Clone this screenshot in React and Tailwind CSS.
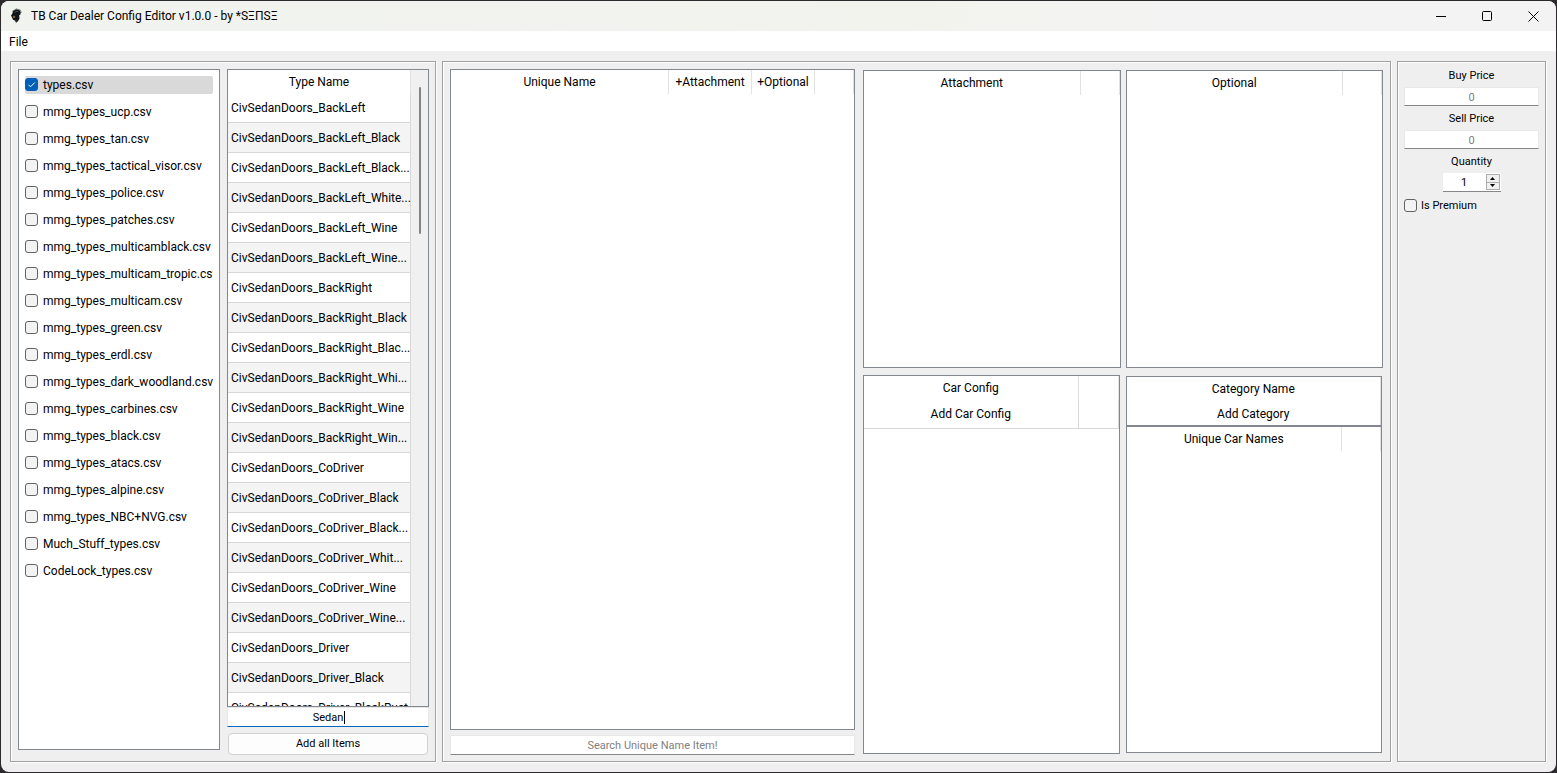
import { useState } from 'react';

const FILES = [
  'types.csv',
  'mmg_types_ucp.csv',
  'mmg_types_tan.csv',
  'mmg_types_tactical_visor.csv',
  'mmg_types_police.csv',
  'mmg_types_patches.csv',
  'mmg_types_multicamblack.csv',
  'mmg_types_multicam_tropic.csv',
  'mmg_types_multicam.csv',
  'mmg_types_green.csv',
  'mmg_types_erdl.csv',
  'mmg_types_dark_woodland.csv',
  'mmg_types_carbines.csv',
  'mmg_types_black.csv',
  'mmg_types_atacs.csv',
  'mmg_types_alpine.csv',
  'mmg_types_NBC+NVG.csv',
  'Much_Stuff_types.csv',
  'CodeLock_types.csv',
];

const TYPES = [
  'CivSedanDoors_BackLeft',
  'CivSedanDoors_BackLeft_Black',
  'CivSedanDoors_BackLeft_Black...',
  'CivSedanDoors_BackLeft_White...',
  'CivSedanDoors_BackLeft_Wine',
  'CivSedanDoors_BackLeft_Wine...',
  'CivSedanDoors_BackRight',
  'CivSedanDoors_BackRight_Black',
  'CivSedanDoors_BackRight_Blac...',
  'CivSedanDoors_BackRight_Whi...',
  'CivSedanDoors_BackRight_Wine',
  'CivSedanDoors_BackRight_Win...',
  'CivSedanDoors_CoDriver',
  'CivSedanDoors_CoDriver_Black',
  'CivSedanDoors_CoDriver_Black...',
  'CivSedanDoors_CoDriver_Whit...',
  'CivSedanDoors_CoDriver_Wine',
  'CivSedanDoors_CoDriver_Wine...',
  'CivSedanDoors_Driver',
  'CivSedanDoors_Driver_Black',
  'CivSedanDoors_Driver_BlackRust',
];

const checkbox =
  'peer block h-[13px] w-[13px] appearance-none rounded-[3px] border border-[#626262] bg-[#f3f3f3] checked:border-[#005fb8] checked:bg-[#005fb8]';
const field =
  'block w-full border border-x-[#e8e8e8] border-t-[#e8e8e8] bg-white pt-px text-center outline-none placeholder:text-[#808080]';
const th = 'h-6 border-r border-[#e2e2e2] p-0 font-normal';

function CheckBox(props) {
  return (
    <span className="relative block shrink-0">
      <input type="checkbox" className={checkbox} {...props} />
      <svg viewBox="0 0 13 13" className="pointer-events-none absolute inset-0 hidden h-[13px] w-[13px] peer-checked:block">
        <path d="M3.5 6.8 5.5 8.8 9.7 4.6" fill="none" stroke="#fff" strokeWidth="1" />
      </svg>
    </span>
  );
}

function Panel({ className, children }) {
  return (
    <section className={`border border-[#a0a0a0] shadow-[1px_1px_0_#fff,inset_1px_1px_0_#fff] ${className}`}>
      {children}
    </section>
  );
}

function Box({ className = '', children }) {
  return <div className={`overflow-hidden border border-[#828790] bg-white ${className}`}>{children}</div>;
}

function TitleBar() {
  return (
    <header className="flex h-[30px] shrink-0 items-center bg-linear-to-r from-[#f1f3ef] via-[#f3f3ee] via-60% to-[#f3f3f3] to-75%">
      <svg viewBox="0 0 14 16" className="ml-2 h-4 w-[14px]">
        <path d="M4.2 2.8 7 1.2l3.2.6 1.6 2.4-.4 2.2-1.2.8.3 3.6-1.6 2.5-1.8 1.5-1.3-2.2-1.8-.8L3 9.4 2 7.6l1.4-2.2z" fill="#111416" />
        <path d="M3 3.6 7.3.9l4 1.2 1 2.6" fill="none" stroke="#6d7068" strokeWidth=".9" />
        <path d="M5.5 4.4 8 3.2l1.6.8" fill="none" stroke="#4c5b67" strokeWidth=".8" />
        <path d="M4.2 8.2h1.6v1.2H4.2zM6.4 12.2l1.4 1" fill="#b79663" stroke="#85714d" strokeWidth=".5" />
      </svg>
      <h1 className="ml-2">TB Car Dealer Config Editor v1.0.0 - by *SΞΠSΞ</h1>
      <div className="ml-auto flex h-full">
        <button aria-label="Minimize" className="flex w-[46px] items-center justify-center">
          <svg width="11" height="11" shapeRendering="crispEdges"><path d="M0 5.5h10" stroke="#000" /></svg>
        </button>
        <button aria-label="Maximize" className="flex w-[46px] items-center justify-center">
          <svg width="11" height="11"><rect x=".5" y=".5" width="9" height="9" rx="1" fill="none" stroke="#000" /></svg>
        </button>
        <button aria-label="Close" className="flex w-[46px] items-center justify-center">
          <svg width="11" height="11"><path d="M.5.5l10 10M10.5.5l-10 10" stroke="#000" /></svg>
        </button>
      </div>
    </header>
  );
}

function FileList() {
  const [checked, setChecked] = useState(['types.csv']);
  const toggle = (name) =>
    setChecked(checked.includes(name) ? checked.filter((n) => n !== name) : [...checked, name]);

  return (
    <Box className="mb-[5px] min-w-0 p-[6px]">
      <ul className="flex flex-col gap-[9px]">
        {FILES.map((name, i) => (
          <li key={name}>
            <label
              className={`flex h-[18px] items-center gap-[5px] overflow-hidden rounded-[2px] pb-px whitespace-nowrap ${i === 0 ? 'bg-[#d9d9d9]' : ''}`}
            >
              <CheckBox checked={checked.includes(name)} onChange={() => toggle(name)} />
              {name}
            </label>
          </li>
        ))}
      </ul>
    </Box>
  );
}

function TypeList() {
  return (
    <div className="flex min-h-0 min-w-0 flex-col">
      <Box className="flex min-h-0 flex-1">
        <div className="min-w-0 flex-1 overflow-hidden">
          <table className="w-full table-fixed border-separate border-spacing-0">
            <thead>
              <tr>
                <th className="h-[23px] border-r border-[#e2e2e2] p-0 font-normal">Type Name</th>
              </tr>
            </thead>
            <tbody>
              {TYPES.map((name) => (
                <tr key={name} className="even:bg-[#f4f4f4]">
                  <td className="h-[30px] border-r border-b border-[#d8d8d8] py-0 pr-0 pl-[3px] whitespace-nowrap">
                    {name}
                  </td>
                </tr>
              ))}
            </tbody>
          </table>
        </div>
        <div className="w-[17px] bg-[#f0f0f0] pt-[17px]">
          <div className="mx-auto h-[147px] w-[2px] rounded-full bg-[#858585]" />
        </div>
      </Box>
      <div className="relative text-[11px] leading-4">
        <input
          aria-label="Search types"
          defaultValue="Sedan"
          className={`h-5 border-b-[#0067c0] caret-transparent ${field}`}
        />
        <span className="pointer-events-none absolute top-1 left-1/2 ml-4 h-[13px] w-px bg-black" />
      </div>
      <button className="mx-px mt-[6px] h-[22px] rounded-[4px] border border-[#d0d0d0] bg-[#fdfdfd] text-[11px] leading-4">
        Add all Items
      </button>
    </div>
  );
}

function HeaderTable({ title, className }) {
  return (
    <Box className={className}>
      <table className="w-full table-fixed border-separate border-spacing-0">
        <thead>
          <tr>
            <th className={th}>{title}</th>
            <th className={`w-[39px] ${th}`} />
          </tr>
        </thead>
      </table>
    </Box>
  );
}

function UniqueNames() {
  return (
    <div className="flex w-[405px] flex-col">
      <Box className="flex-1">
        <table className="w-full table-fixed border-separate border-spacing-0">
          <thead>
            <tr>
              <th className={th}>Unique Name</th>
              <th className={`w-[83px] ${th}`}>+Attachment</th>
              <th className={`w-[63px] ${th}`}>+Optional</th>
              <th className={`w-[39px] ${th}`} />
            </tr>
          </thead>
        </table>
      </Box>
      <input
        aria-label="Search unique names"
        placeholder="Search Unique Name Item!"
        className={`mt-[5px] h-5 border-b-[#868686] text-[11px] leading-4 ${field}`}
      />
    </div>
  );
}

function CarTables() {
  return (
    <div className="flex min-w-0 flex-1 flex-col gap-[7px] pt-px pb-px">
      <div className="flex h-[298px] gap-[5px]">
        <HeaderTable title="Attachment" className="flex-1" />
        <HeaderTable title="Optional" className="flex-1" />
      </div>
      <div className="grid flex-1 grid-cols-2 gap-[6px] pr-px">
        <Box>
          <table className="w-full table-fixed border-separate border-spacing-0">
            <thead>
              <tr>
                <th className={th}>Car Config</th>
                <th className={`w-10 ${th}`} />
              </tr>
            </thead>
            <tbody>
              <tr>
                <td className="h-[29px] border-r border-b border-[#d8d8d8] p-0 text-center">Add Car Config</td>
                <td className="border-r border-b border-[#d8d8d8] p-0" />
              </tr>
            </tbody>
          </table>
        </Box>
        <div className="flex flex-col pt-px pb-px">
          <Box>
            <table className="w-full border-separate border-spacing-0">
              <thead>
                <tr>
                  <th className={th}>Category Name</th>
                </tr>
              </thead>
              <tbody>
                <tr>
                  <td className="h-6 border-r border-[#d8d8d8] p-0 pt-[2px] text-center">Add Category</td>
                </tr>
              </tbody>
            </table>
          </Box>
          <HeaderTable title="Unique Car Names" className="flex-1" />
        </div>
      </div>
    </div>
  );
}

function PriceField({ id, label }) {
  return (
    <div>
      <label htmlFor={id} className="flex h-6 items-center justify-center pt-[2px]">{label}</label>
      <input id={id} placeholder="0" className={`h-[19px] border-b-[#868686] ${field}`} />
    </div>
  );
}

function Details() {
  const [quantity, setQuantity] = useState(1);

  return (
    <Panel className="w-[149px] px-[6px] pt-px text-[11px] leading-4">
      <PriceField id="buy" label="Buy Price" />
      <PriceField id="sell" label="Sell Price" />
      <label htmlFor="quantity" className="flex h-6 items-center justify-center pt-[2px]">Quantity</label>
      <div className="mx-auto flex h-[19px] w-[58px] border-b border-[#868686] bg-white">
        <input
          id="quantity"
          value={quantity}
          onChange={(e) => setQuantity(Number(e.target.value) || 0)}
          className="w-[43px] pt-[2px] text-center outline-none"
        />
        <div className="my-px flex w-[14px] flex-col border border-[#adadad] bg-[#f0f0f0]">
          <button aria-label="Increase" onClick={() => setQuantity(quantity + 1)} className="flex flex-1 items-center justify-center border-b border-[#adadad]">
            <svg width="5" height="3"><path d="M0 3 2.5 0 5 3z" /></svg>
          </button>
          <button aria-label="Decrease" onClick={() => setQuantity(quantity - 1)} className="flex flex-1 items-center justify-center">
            <svg width="5" height="3"><path d="M0 0 2.5 3 5 0z" /></svg>
          </button>
        </div>
      </div>
      <label className="mt-[5px] flex h-[17px] items-center gap-1">
        <CheckBox />
        Is Premium
      </label>
    </Panel>
  );
}

export default function App() {
  return (
    <div className="h-screen bg-[#2b292b] p-px font-['Roboto','Open_Sans',sans-serif] text-[12px] leading-4 text-black">
      <div className="flex h-full flex-col overflow-hidden rounded-lg bg-[#efefef]">
        <TitleBar />
        <nav className="flex h-5 shrink-0 items-center bg-white px-2 pt-[2px]">
          <button>File</button>
        </nav>
        <main className="flex min-h-0 flex-1 gap-[6px] py-[10px] pr-[10px] pl-[9px]">
          <Panel className="grid w-[426px] grid-cols-2 grid-rows-[minmax(0,1fr)] gap-[7px] pt-[7px] pr-[6px] pb-[6px] pl-[7px]">
            <FileList />
            <TypeList />
          </Panel>
          <Panel className="flex min-w-0 flex-1 gap-2 px-[7px] pt-[7px] pb-[6px]">
            <UniqueNames />
            <CarTables />
          </Panel>
          <Details />
        </main>
      </div>
    </div>
  );
}
